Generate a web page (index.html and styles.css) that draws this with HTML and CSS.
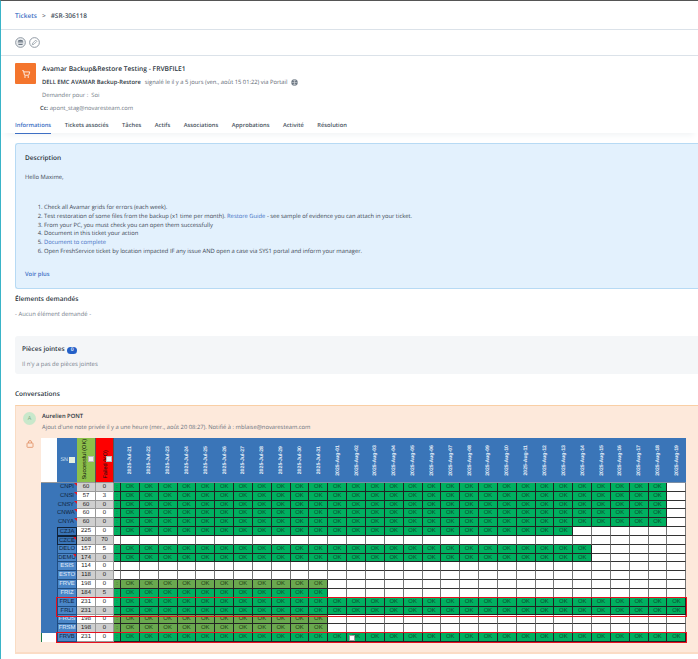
FILE: index.html
```html
<!DOCTYPE html>
<html lang="fr">
<head>
    <meta charset="UTF-8">
    <meta name="viewport" content="width=device-width, initial-scale=1.0">
    <title>Ticket #SR-306118</title>
    <link rel="stylesheet" href="styles.css">
</head>
<body>
    <nav class="crumbs">
        <a href="#">Tickets</a>
        <span class="crumb-sep">&gt;</span>
        <span>#SR-306118</span>
    </nav>

    <div class="actions">
        <span class="round-btn">
            <svg viewBox="0 0 12 12" width="11" height="11"><circle cx="6" cy="6" r="5.3" fill="#eef1f3" stroke="#87919b"/><path d="M3 5.2a3 2.2 0 0 1 6 0zM3 6h6v.8H3zM3.4 7.5h5.2L8 8.6H4z" fill="#6b7682"/></svg>
        </span>
        <span class="round-btn">
            <svg viewBox="0 0 12 12" width="11" height="11"><circle cx="6" cy="6" r="5.3" fill="#fff" stroke="#87919b"/><path d="M3.6 8.4l.5-1.8 3.2-3.2 1.3 1.3-3.2 3.2z" fill="none" stroke="#87919b" stroke-width=".8"/></svg>
        </span>
    </div>

    <header class="ticket-head">
        <div class="ticket-icon">
            <svg viewBox="0 0 12 12" width="10" height="10"><path d="M1.5 2h1.5l1.2 5.5h5L10.5 3.5H3.4" fill="none" stroke="#fff" stroke-width="1"/><circle cx="4.8" cy="9.5" r=".9" fill="#fff"/><circle cx="8.7" cy="9.5" r=".9" fill="#fff"/></svg>
        </div>
        <div class="ticket-info">
            <div class="ticket-title">Avamar Backup&amp;Restore Testing - FRVBFILE1</div>
            <div class="ticket-meta">
                <b>DELL EMC AVAMAR Backup-Restore</b>
                <span>signalé le il y a 5 jours (ven., août 15 01:22) via Portail</span>
                <svg viewBox="0 0 12 12" width="7" height="7"><circle cx="6" cy="6" r="5.5" fill="#6b7682"/><path d="M1 6h10M6 1v10M3 2.5q3 1.5 6 0M3 9.5q3-1.5 6 0" fill="none" stroke="#fff" stroke-width=".7"/></svg>
            </div>
            <div class="ticket-for">Demander pour :&nbsp; Soi</div>
            <div class="ticket-cc"><b>Cc:</b> apont_stag@novaresteam.com</div>
        </div>
    </header>

    <div class="tabs">
        <a class="tab active" href="#">Informations</a>
        <a class="tab" href="#">Tickets associés</a>
        <a class="tab" href="#">Tâches</a>
        <a class="tab" href="#">Actifs</a>
        <a class="tab" href="#">Associations</a>
        <a class="tab" href="#">Approbations</a>
        <a class="tab" href="#">Activité</a>
        <a class="tab" href="#">Résolution</a>
    </div>

    <main class="content">
        <section class="desc">
            <h3>Description</h3>
            <p class="hello">Hello Maxime,</p>
            <ol>
                <li>Check all Avamar grids for errors (each week).</li>
                <li>Test restoration of some files from the backup (x1 time per month). <a href="#">Restore Guide</a> - see sample of evidence you can attach in your ticket.</li>
                <li>From your PC, you must check you can open them successfully</li>
                <li>Document in this ticket your action</li>
                <li><a href="#">Document to complete</a></li>
                <li>Open FreshService ticket by location impacted IF any issue AND open a case via SYS1 portal and inform your manager.</li>
            </ol>
            <a class="more" href="#">Voir plus</a>
        </section>

        <h3 class="requested">Élements demandés</h3>
        <p class="muted none">- Aucun élément demandé -</p>

        <section class="attach">
            <h3>Pièces jointes <span class="badge">0</span></h3>
            <p class="muted">Il n'y a pas de pièces jointes</p>
        </section>

        <h3 class="conv-title">Conversations</h3>

        <section class="note">
            <div class="note-head">
                <span class="avatar">A</span>
                <div>
                    <div class="note-author">Aurelien PONT</div>
                    <div class="note-sub">Ajout d'une note privée il y a une heure (mer., août 20 08:27). Notifié à : mblaise@novaresteam.com</div>
                </div>
            </div>
            <div class="note-body">
                <svg class="lock" viewBox="0 0 12 12" width="8" height="8"><rect x="1.5" y="4.5" width="9" height="6.5" rx="1" fill="none" stroke="#e08a5e" stroke-width="1.2"/><path d="M3.8 4.5V3a2.2 2.2 0 0 1 4.4 0v1.5" fill="none" stroke="#e08a5e" stroke-width="1.2"/></svg>
                <div class="sheet-wrap">
                    <div class="sheet" id="sheet"></div>
                    <div class="red-box red-box-a"></div>
                    <div class="red-box red-box-b"></div>
                    <span class="cell-marker"></span>
                </div>
            </div>
        </section>
    </main>

    <script src="sheet.js"></script>
</body>
</html>
```

FILE: styles.css
```css
body {
    font-family: "Open Sans", Arial, sans-serif;
    font-size: 5.8px;
    line-height: 9px;
    text-rendering: geometricPrecision;
    margin: 0;
    padding: 0;
    height: 658px;
    overflow: hidden;
    background-color: #fff;
    color: #3b4652;
    border-top: 1px solid #555;
    border-left: 1px solid #3ab4c8;
}

a {
    color: #3d6fc4;
    text-decoration: none;
}

h3 {
    margin: 0;
    font-size: 6.5px;
    font-weight: 600;
    color: #2b3540;
}

.crumbs {
    display: flex;
    align-items: center;
    gap: 5px;
    height: 28px;
    padding-left: 14px;
    font-size: 6.5px;
    font-weight: 600;
    border-bottom: 1px solid #dbe2e9;
    color: #47525e;
}

.crumb-sep {
    font-weight: 400;
}

.actions {
    display: flex;
    align-items: center;
    gap: 3px;
    height: 25px;
    padding-left: 14px;
    border-bottom: 1px solid #dbe2e9;
}

.round-btn {
    display: flex;
}

.ticket-head {
    display: flex;
    gap: 6px;
    padding: 7px 0 0 14px;
    height: 60px;
    box-sizing: border-box;
}

.ticket-icon {
    display: flex;
    align-items: center;
    justify-content: center;
    width: 21px;
    height: 21px;
    border-radius: 1px;
    background-color: #f4752d;
}

.ticket-title {
    font-size: 6.67px;
    font-weight: 600;
    color: #2b3540;
    height: 13px;
    line-height: 11px;
}

.ticket-meta {
    display: flex;
    align-items: center;
    gap: 4px;
    height: 13px;
    color: #5e6873;
}

.ticket-meta b {
    color: #2b3540;
    font-weight: 600;
}

.ticket-for {
    height: 13px;
    line-height: 13px;
    color: #6e7883;
}

.ticket-cc {
    margin-left: -2px;
    height: 12px;
    line-height: 13px;
    color: #6e7883;
}

.ticket-cc b {
    color: #2b3540;
    font-weight: 600;
}

.tabs {
    display: flex;
    gap: 13.5px;
    height: 17px;
    padding-left: 14px;
    font-size: 5.75px;
    font-weight: 600;
    box-shadow: 0 6px 6px -4px #f0f3f5;
}

.tab {
    color: #47525e;
    height: 17px;
    line-height: 18px;
}

.tab.active {
    color: #3d6fc4;
    border-bottom: 1px solid #3d6fc4;
}

.content {
    padding: 10px 0 0 14px;
}

.desc {
    height: 146px;
    box-sizing: border-box;
    padding: 9px 0 0 9px;
    background-color: #e3f1fd;
    border: 1px solid #b7daf4;
    border-right: none;
    border-radius: 3px 0 0 3px;
    white-space: nowrap;
    overflow: hidden;
}

.hello {
    margin: 11px 0 0;
}

.desc ol {
    margin: 21px 0 0;
    padding-left: 19px;
}

.desc li {
    height: 8.8px;
}

.more {
    display: block;
    margin-top: 14px;
    font-weight: 600;
}

.requested {
    margin-top: 5px;
}

.muted {
    margin: 0;
    color: #77818c;
}

.none {
    margin-top: 7px;
    font-size: 5.9px;
}

.attach {
    margin-top: 17px;
    height: 38px;
    box-sizing: border-box;
    padding: 8px 0 0 7px;
    background-color: #f4f6f8;
    border-radius: 3px 0 0 3px;
}

.attach h3 {
    font-size: 6.5px;
}

.attach .muted {
    margin-top: 6px;
    font-size: 5.9px;
}

.badge {
    display: inline-block;
    width: 10px;
    height: 7px;
    line-height: 7px;
    margin-left: 1px;
    border-radius: 4px;
    text-align: center;
    font-size: 5px;
    color: #fff;
    background-color: #2460c8;
}

.conv-title {
    margin-top: 15px;
}

.note {
    margin-top: 7px;
    height: 249px;
    box-sizing: border-box;
    background-color: #fde9db;
    border-top: 1px solid #f9cfa5;
    border-bottom: 2px solid #fbdcc5;
    border-left: 1px solid #f9dcc4;
}

.note-head {
    display: flex;
    gap: 6px;
    padding: 6px 0 0 7px;
    height: 32px;
    box-sizing: border-box;
}

.avatar {
    width: 13px;
    height: 13px;
    line-height: 13px;
    border-radius: 50%;
    text-align: center;
    font-size: 5.5px;
    color: #7aa982;
    background-color: #c9e8cb;
}

.note-author {
    font-size: 5.8px;
    font-weight: 600;
    color: #2b3540;
    height: 11px;
    line-height: 9px;
}

.note-sub {
    color: #68727d;
}

.note-body {
    display: flex;
    gap: 7px;
    padding-left: 10px;
}

.lock {
    margin-top: 2px;
}

/* spreadsheet pasted in the note */
.sheet-wrap {
    position: relative;
}

.sheet {
    display: grid;
    grid-template-columns: 16px 20px 19px 18px 7px repeat(30, 18.85px);
    grid-template-rows: 45px repeat(18, 8.83px);
    font-family: "Liberation Sans", Arial, sans-serif;
    font-size: 5.9px;
    line-height: 8px;
    color: #111;
    background-color: #fff;
}

.c {
    position: relative;
    box-sizing: border-box;
    text-align: center;
    overflow: hidden;
    white-space: nowrap;
    border-right: 1px solid #222;
    border-bottom: 1px solid #222;
}

.head-blank {
    background-color: #fff;
    border: none;
    border-bottom: 1px solid #999;
}

.head-blue {
    background-color: #3a75b8;
    color: #fff;
    border: none;
    border-bottom: 1px solid #7b8ea5;
}

.head-sn {
    display: flex;
    align-items: center;
    justify-content: flex-end;
    gap: 1px;
    padding-right: 2px;
    font-size: 5.4px;
    background-color: #3a75b8;
    color: #d5e4f5;
    border: none;
    border-bottom: 1px solid #7b8ea5;
}

.head-ok,
.head-ko {
    display: flex;
    justify-content: flex-start;
    align-items: flex-end;
    padding: 0 0 3px 4px;
    border-right: 1px solid #555;
    border-bottom: 1px solid #999;
    color: #111;
}

.head-ko {
    padding-left: 6px;
}

.head-ok {
    background-color: #8cc04a;
}

.head-ko {
    background-color: #fe0000;
}

.vert {
    writing-mode: vertical-rl;
    transform: rotate(180deg);
    font-size: 5.6px;
    white-space: nowrap;
}

.head-date {
    display: flex;
    justify-content: center;
    align-items: center;
    font-weight: 700;
    background-color: #3a75b8;
    color: #eaf1f9;
    border: none;
    border-bottom: 1px solid #7b8ea5;
}

.head-date .vert {
    font-size: 5.2px;
}

.drop {
    position: absolute;
    right: 1px;
    bottom: 20px;
    width: 6px;
    height: 6px;
    background-color: #eee;
    border: 1px solid #bbb;
    box-sizing: border-box;
}

.filter {
    display: inline-block;
    width: 6px;
    height: 6px;
    background-color: #e3f0e0;
}

.side {
    grid-row: 2 / span 17;
    background-color: #3a75b8;
    border: none;
}

.side-end {
    background-color: #fff;
    border: none;
    border-left: 1px solid #1c7a48;
}

.name {
    background-color: #3a75b8;
    color: #10233a;
    border: none;
    text-align: right;
    padding-right: 3px;
}

.name.plain {
    background-color: #4a86c8;
    color: #e8f0fa;
    text-align: center;
    padding-right: 0;
    border: 1px solid #1f4c80;
    border-top: none;
}

.name.dark {
    color: #10233a;
}

.name.boxed {
    border: 1px solid #10233a;
    text-align: center;
    padding-right: 0;
}

/* comment marker in the corner of a name cell */
.name.marked::after {
    content: "";
    position: absolute;
    top: 0;
    right: 0;
    border-top: 3px solid #e8101f;
    border-left: 3px solid transparent;
}

.grey {
    background-color: #cfcfcf;
    border-color: #999;
}

.white {
    border-color: #999;
}

.ok {
    background-color: #00b060;
    color: #0c4a2c;
}

.olive {
    background-color: #6aa84f;
    color: #1d3d12;
}

.empty {
    border-right-color: #777;
    border-bottom-color: #333;
}

.red-box {
    position: absolute;
    left: 15px;
    width: 631px;
    box-sizing: border-box;
    border: 1.5px solid #e8101f;
}

.red-box-a {
    top: 159px;
    height: 20px;
}

.red-box-b {
    top: 194px;
    height: 11px;
}

.cell-marker {
    position: absolute;
    left: 308px;
    top: 197px;
    width: 6px;
    height: 6px;
    box-sizing: border-box;
    background-color: #fff;
    border: 1px solid #999;
}
```

FILE: sheet.js
```js
// name, ok, ko, number of filled days, cell style
const rows = [
    ['CNPI', 60, 0, 29, 'ok'],
    ['CNSI', 57, 3, 29, 'ok'],
    ['CNSY', 60, 0, 29, 'ok'],
    ['CNWA', 60, 0, 29, 'ok'],
    ['CNYA', 60, 0, 29, 'ok'],
    ['CZJA', 225, 0, 24, 'ok'],
    ['CZCE', 108, 70, 0, 'ok'],
    ['DELO', 157, 5, 25, 'ok'],
    ['DEMU', 174, 0, 25, 'ok'],
    ['ESIS', 114, 0, 0, 'ok'],
    ['ESTO', 118, 0, 0, 'ok'],
    ['FRVE', 198, 0, 11, 'olive'],
    ['FRIZ', 184, 5, 11, 'ok'],
    ['FRLE', 231, 0, 30, 'ok'],
    ['FRLI', 231, 0, 30, 'ok'],
    ['FROS', 198, 0, 11, 'olive'],
    ['FRSM', 198, 0, 11, 'olive'],
    ['FRVB', 231, 0, 30, 'ok']
];
const plainNames = ['DELO', 'DEMU', 'ESIS', 'ESTO', 'FRVE', 'FRIZ', 'FRLE', 'FRLI', 'FROS', 'FRSM', 'FRVB'];
const darkNames = ['DELO', 'DEMU', 'FRLE', 'FRLI', 'FRVB'];
const markedNames = ['CNPI', 'CNSI', 'CNSY', 'CNWA', 'CNYA', 'CZCE', 'DEMU'];
const sheet = document.getElementById('sheet');

function addCell(className, text) {
    const div = document.createElement('div');
    div.className = 'c ' + className;
    if (text !== undefined) div.textContent = text;
    sheet.appendChild(div);
    return div;
}

function addVertical(className, text) {
    const cell = addCell(className);
    const label = document.createElement('span');
    label.className = 'vert';
    label.textContent = text;
    cell.appendChild(label);
    return cell;
}

function dayLabels() {
    const days = [];
    for (let d = 21; d <= 31; d++) days.push('2025-Jul-' + d);
    for (let d = 1; d <= 19; d++) days.push('2025-Aug-' + String(d).padStart(2, '0'));
    return days;
}

// Header
addCell('head-blank');
addCell('head-sn').innerHTML = 'SN<span class="filter"></span>';
addVertical('head-ok', 'Successful (OK)').insertAdjacentHTML('beforeend', '<span class="drop"></span>');
addVertical('head-ko', 'Failed (KO)').insertAdjacentHTML('beforeend', '<span class="drop"></span>');
addCell('head-blue');
dayLabels().forEach(day => addVertical('head-date', day));

// Rows
rows.forEach((row, i) => {
    const [name, ok, ko, filled, style] = row;
    if (i === 0) addCell('side');
    if (i === rows.length - 1) addCell('side-end');

    let nameClass = 'name';
    if (plainNames.includes(name)) nameClass += ' plain';
    if (darkNames.includes(name)) nameClass += ' dark';
    if (markedNames.includes(name)) nameClass += ' marked';
    if (name === 'CZJA' || name === 'CZCE') nameClass += ' boxed';
    addCell(nameClass, name);

    const tone = i % 2 === 0 ? 'grey' : 'white';
    addCell(tone, ok);
    addCell(tone, ko);
    addCell(filled ? style : 'empty', filled ? ':' : '');

    for (let d = 0; d < 30; d++) {
        if (d < filled) addCell(style, 'OK');
        else addCell('empty');
    }
});
```
